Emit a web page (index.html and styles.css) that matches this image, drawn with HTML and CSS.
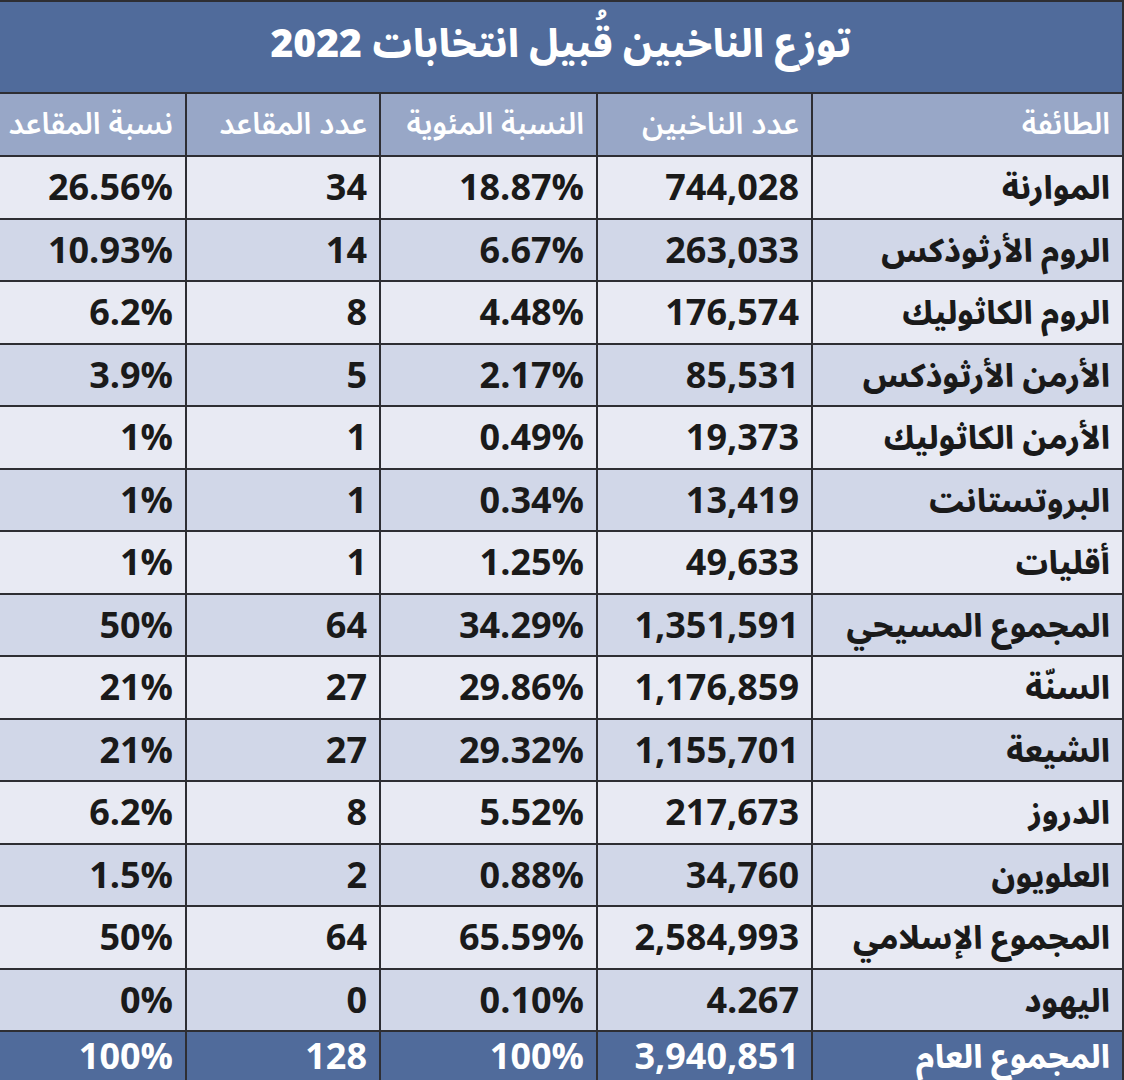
FILE: index.html
```html
<!DOCTYPE html>
<html lang="ar" dir="rtl">
<head>
<meta charset="utf-8">
<link rel="stylesheet" href="styles.css">
<title>توزع الناخبين قُبيل انتخابات 2022</title>
</head>
<body>
<table class="voters">
  <colgroup>
    <col class="c1"><col class="c2"><col class="c3"><col class="c4"><col class="c5">
  </colgroup>
  <thead>
    <tr class="title-row"><th colspan="5">توزع الناخبين قُبيل انتخابات 2022</th></tr>
    <tr class="head-row">
      <th>الطائفة</th><th>عدد الناخبين</th><th>النسبة المئوية</th><th>عدد المقاعد</th><th>نسبة المقاعد</th>
    </tr>
  </thead>
  <tbody>
    <tr class="light"><td>الموارنة</td><td>744,028</td><td>18.87%</td><td>34</td><td>26.56%</td></tr>
    <tr class="dark"><td>الروم الأرثوذكس</td><td>263,033</td><td>6.67%</td><td>14</td><td>10.93%</td></tr>
    <tr class="light"><td>الروم الكاثوليك</td><td>176,574</td><td>4.48%</td><td>8</td><td>6.2%</td></tr>
    <tr class="dark"><td>الأرمن الأرثوذكس</td><td>85,531</td><td>2.17%</td><td>5</td><td>3.9%</td></tr>
    <tr class="light"><td>الأرمن الكاثوليك</td><td>19,373</td><td>0.49%</td><td>1</td><td>1%</td></tr>
    <tr class="dark"><td>البروتستانت</td><td>13,419</td><td>0.34%</td><td>1</td><td>1%</td></tr>
    <tr class="light"><td>أقليات</td><td>49,633</td><td>1.25%</td><td>1</td><td>1%</td></tr>
    <tr class="dark"><td>المجموع المسيحي</td><td>1,351,591</td><td>34.29%</td><td>64</td><td>50%</td></tr>
    <tr class="light"><td>السنّة</td><td>1,176,859</td><td>29.86%</td><td>27</td><td>21%</td></tr>
    <tr class="dark"><td>الشيعة</td><td>1,155,701</td><td>29.32%</td><td>27</td><td>21%</td></tr>
    <tr class="light"><td>الدروز</td><td>217,673</td><td>5.52%</td><td>8</td><td>6.2%</td></tr>
    <tr class="dark"><td>العلويون</td><td>34,760</td><td>0.88%</td><td>2</td><td>1.5%</td></tr>
    <tr class="light"><td>المجموع الإسلامي</td><td>2,584,993</td><td>65.59%</td><td>64</td><td>50%</td></tr>
    <tr class="dark"><td>اليهود</td><td>4.267</td><td>0.10%</td><td>0</td><td>0%</td></tr>
  </tbody>
  <tfoot>
    <tr class="total"><td>المجموع العام</td><td>3,940,851</td><td>100%</td><td>128</td><td>100%</td></tr>
  </tfoot>
</table>
</body>
</html>
```
FILE: styles.css
```css
html, body {
  margin: 0;
  padding: 0;
  background: #ffffff;
}
body {
  width: 1124px;
  height: 1080px;
  overflow: hidden;
  font-family: "Open Sans", "Noto Sans Arabic", "Noto Sans", "DejaVu Sans", sans-serif;
}
.voters {
  width: 1124px;
  border-collapse: collapse;
  table-layout: fixed;
  direction: rtl;
}
.c1 { width: 311px; }
.c2 { width: 215px; }
.c3 { width: 217px; }
.c4 { width: 194px; }
.c5 { width: 187px; }

.voters th, .voters td {
  border: 2px solid #2e2e33;
  text-align: right;
  padding: 0 12px 0 10px;
  white-space: nowrap;
  overflow: hidden;
}
.title-row th {
  height: 85px;
  background: #506b9b;
  color: #ffffff;
  text-align: center;
  font-size: 39px;
  font-weight: 800;
  padding: 0 0 5px 0;
}
.head-row th {
  height: 57px;
  background: #98a7c7;
  color: #ffffff;
  font-size: 30px;
  font-weight: 600;
  line-height: 1;
  padding-bottom: 4px;
}
.voters tbody td {
  height: 60.5px;
  font-size: 36px;
  font-weight: 700;
  color: #1a1a1a;
  line-height: 1;
}
.voters tbody td:first-child,
.voters tfoot td:first-child {
  font-size: 32px;
  font-weight: 800;
}
.light td { background: #e8eaf3; }
.dark td { background: #d1d7e8; }
.total td {
  height: 48px;
  background: #506b9b;
  color: #ffffff;
  font-size: 36px;
  font-weight: 700;
  line-height: 1;
}
```
